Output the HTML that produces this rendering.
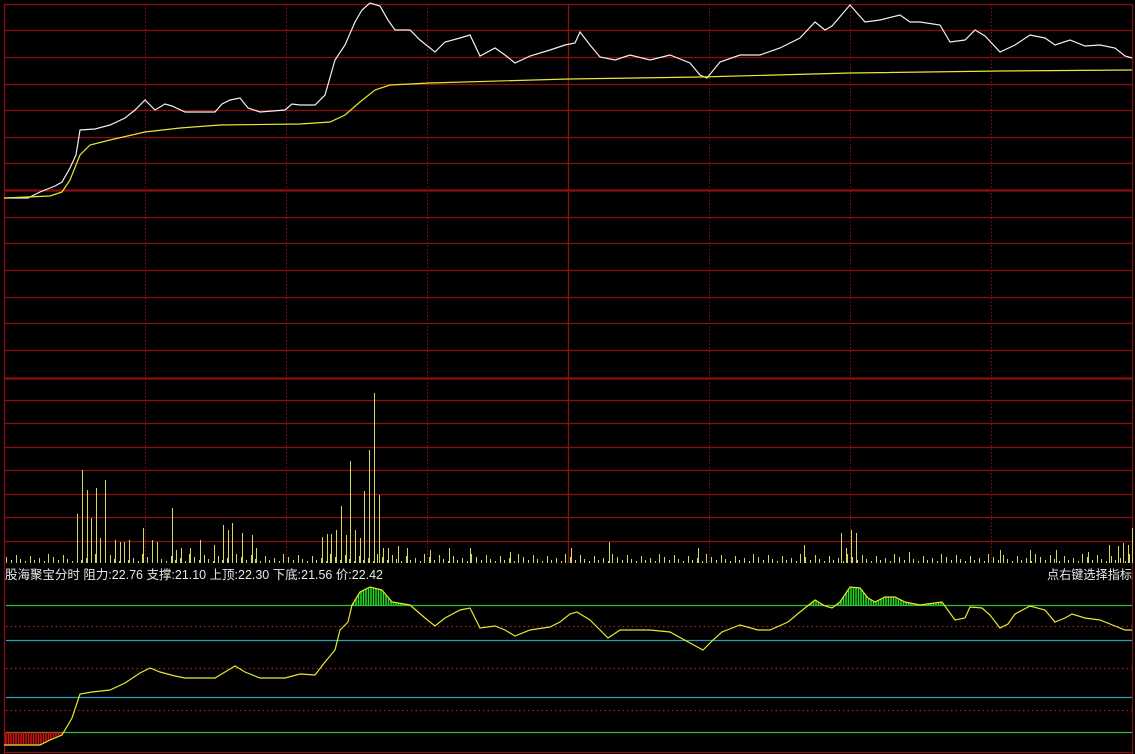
<!DOCTYPE html>
<html><head><meta charset="utf-8"><style>
html,body{margin:0;padding:0;background:#000;width:1135px;height:754px;overflow:hidden}
svg{display:block}
text{font-family:"Liberation Sans","Noto Sans CJK SC",sans-serif;font-size:12.5px;fill:#e8e8e8}
</style></head><body>
<svg width="1135" height="754" viewBox="0 0 1135 754" xmlns="http://www.w3.org/2000/svg">
<defs>
<pattern id="vp" x="6" y="551" width="47" height="12" patternUnits="userSpaceOnUse">
<path d="M0.5 6V12M5.5 9V12M10.5 4V12M14.5 8V12M19.5 10V12M24.5 5V12M28.5 9V12M33.5 7V12M38.5 10V12M42.5 3V12" stroke="#d8d860" stroke-width="1"/>
</pattern>
</defs>
<rect width="1135" height="754" fill="#000"/>
<g stroke="#8c1010" stroke-width="1.3" fill="none">
<path d="M4 4.5H1132M4 30.5H1132M4 57.5H1132M4 84.5H1132M4 110.5H1132M4 137.5H1132M4 163.5H1132M4 217.5H1132M4 243.5H1132M4 270.5H1132M4 297.5H1132M4 323.5H1132M4 350.5H1132M4 400.5H1132M4 423.5H1132M4 447.5H1132M4 470.5H1132M4 494.5H1132M4 517.5H1132M4 541.5H1132"/>
<path d="M4 190.5H1132M4 378.5H1132" stroke-width="2.2"/>
<path d="M4.5 4V754M568.5 4V563M1132.5 4V754M4 752.5H1133"/>
<path d="M145.5 4V563M286.5 4V563M427.5 4V563M709.5 4V563M850.5 4V563M991.5 4V563" stroke-width="1" stroke-dasharray="1.5,2"/>
</g>
<rect x="6" y="551" width="1126" height="12" fill="url(#vp)"/>
<path stroke="#d8d860" stroke-width="1" d="M77.5 514V563M82.5 470V563M87.5 490V563M91.5 518V563M96.5 488V563M100.5 538V563M105.5 480V563M115.5 540V563M120.5 542V563M124.5 542V563M129.5 540V563M143.5 528V563M152.5 540V563M157.5 542V563M172.5 508V563M176.5 550V563M181.5 548V563M190.5 548V563M200.5 540V563M214.5 545V563M223.5 525V563M228.5 530V563M232.5 523V563M242.5 533V563M252.5 535V563M256.5 548V563M322.5 537V563M327.5 534V563M331.5 534V563M336.5 530V563M341.5 506V563M346.5 535V563M350.5 461V563M355.5 530V563M360.5 538V563M364.5 491V563M369.5 450V563M374.5 393V563M379.5 495V563M383.5 548V563M388.5 548V563M398.5 546V563M407.5 548V563M430.5 550V563M449.5 548V563M470.5 548V563M510.5 552V563M571.5 548V563M609.5 542V563M698.5 548V563M804.5 545V563M841.5 533V563M846.5 548V563M851.5 530V563M856.5 533V563M909.5 552V563M1000.5 550V563M1030.5 550V563M1056.5 550V563M1088.5 552V563M1109.5 545V563M1118.5 546V563M1123.5 543V563M1128.5 545V563M1132.5 528V563"/>
<g stroke-width="1.2" fill="none">
<path d="M6 605.5H1132M6 732.5H1132" stroke="#30c030"/>
<path d="M6 640.5H1132M6 697.5H1132" stroke="#2aa0b0"/>
<path d="M6 626.5H1132M6 668.5H1132M6 710.5H1132" stroke="#b02020" stroke-dasharray="1.5,3"/>
</g>
<g id="fills"></g>
<polyline fill="none" stroke="#f0f0f0" stroke-width="1.2" points="4,198 28,198 40,192 55,186 62,182 70,168 76,155 80,130 95,129 110,125 125,118 135,110 145,100 155,110 165,104 172,106 185,112 215,112 222,104 230,100 240,98 248,108 260,112 285,110 292,104 300,105 315,105 325,95 335,60 345,45 355,22 362,10 370,3 380,6 388,20 395,30 410,30 420,40 435,52 445,42 460,38 470,35 480,56 495,48 505,55 515,63 530,56 550,50 565,45 575,43 580,32 590,45 600,57 615,60 630,55 650,60 670,55 690,63 700,75 707,78 720,62 740,55 760,55 780,48 800,38 815,22 825,30 832,26 850,5 865,22 880,20 900,15 910,22 920,22 940,25 950,42 965,40 975,30 985,36 1000,52 1015,45 1030,35 1045,38 1055,45 1070,40 1085,46 1100,45 1115,48 1125,56 1132,58"/>
<polyline fill="none" stroke="#e8e830" stroke-width="1.2" points="4,198 50,196 62,192 70,180 80,155 90,145 110,140 145,132 180,128 220,125 300,124 330,122 345,115 360,102 375,90 390,85 430,83 568,79 700,77 850,73 1000,71 1132,70"/>
<polyline id="ind" fill="none" stroke="#e8e830" stroke-width="1.2" points="4,745 40,745 50,740 62,735 72,718 80,694 92,692 110,690 125,683 140,673 150,668 160,672 175,676 185,678 215,678 225,672 235,666 245,672 260,678 285,678 300,674 315,675 325,662 335,650 340,630 348,622 352,605 360,592 370,587 382,590 392,602 410,605 425,618 435,626 445,618 460,610 470,608 480,628 495,626 505,630 515,636 530,630 550,627 560,622 570,614 577,612 590,620 600,630 608,638 620,630 650,630 670,632 690,643 703,650 713,640 722,632 740,625 758,630 770,630 788,622 800,612 815,600 825,606 832,608 840,602 850,587 860,588 868,598 875,602 885,597 895,597 905,602 920,605 942,602 955,620 965,618 970,607 982,608 990,615 1000,628 1008,624 1015,614 1030,606 1045,610 1055,622 1065,618 1072,614 1085,618 1100,620 1115,626 1125,630 1132,630"/>
<text x="5" y="579" textLength="378" lengthAdjust="spacingAndGlyphs">股海聚宝分时 阻力:22.76 支撑:21.10 上顶:22.30 下底:21.56 价:22.42</text>
<text x="1047" y="579" textLength="85" lengthAdjust="spacingAndGlyphs">点右键选择指标</text>
</svg>
<script>
var NS="http://www.w3.org/2000/svg";
var f=document.getElementById('fills');
var pts=document.getElementById('ind').getAttribute('points').trim().split(/\s+/).map(function(p){return p.split(',').map(Number);});
function yat(x){for(var i=1;i<pts.length;i++){if(pts[i][0]>=x){var a=pts[i-1],b=pts[i];return a[1]+(b[1]-a[1])*(x-a[0])/(b[0]-a[0]||1);}}return 630;}
function ln(x,y1,y2,c){var e=document.createElementNS(NS,'line');e.setAttribute('x1',x);e.setAttribute('x2',x);e.setAttribute('y1',y1);e.setAttribute('y2',y2);e.setAttribute('stroke',c);e.setAttribute('stroke-width','1.5');f.appendChild(e);}
for(var xx=6;xx<1132;xx+=2.5){var y=yat(xx);
 if(y<605)ln(xx,y,605,'#20e020');
 if(y>732)ln(xx,732,y,'#e01010');}
</script>
</body></html>
